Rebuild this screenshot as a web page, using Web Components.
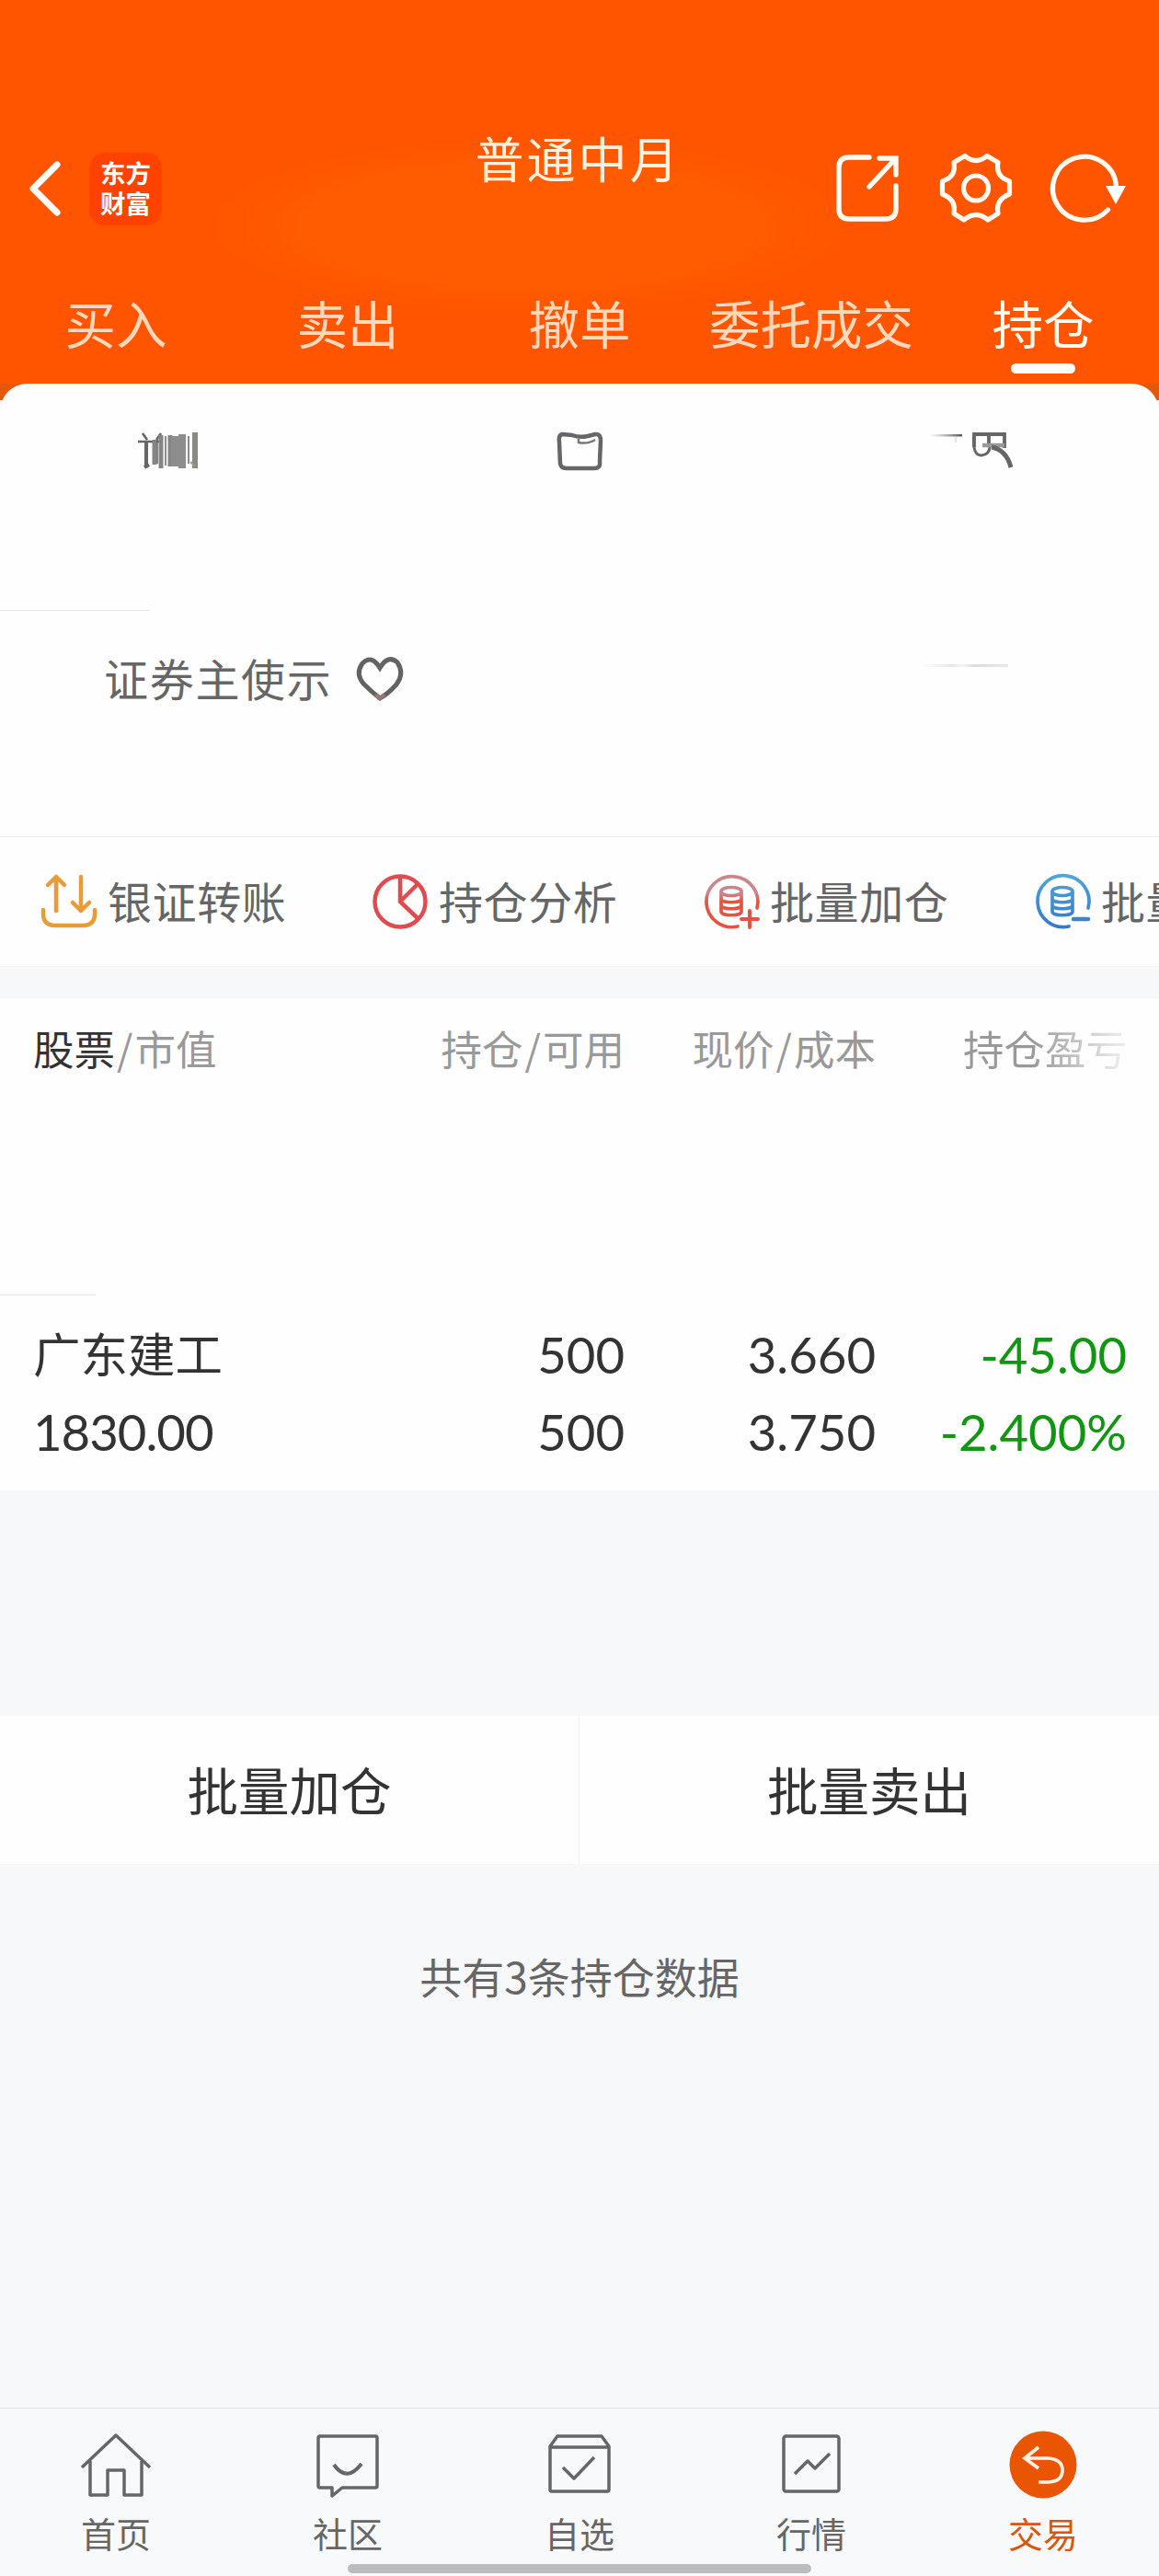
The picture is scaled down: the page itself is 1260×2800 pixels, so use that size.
<!DOCTYPE html>
<html lang="zh-CN">
<head>
<meta charset="utf-8">
<title>持仓</title>
<style>
body {
    margin: 0;
    width: 1260px;
    height: 2800px;
    overflow: hidden;
    background: #f6f8fa;
    color: #333;
    font-family: "Noto Sans CJK SC", sans-serif;
}
</style>
</head>
<body>
<trade-page></trade-page>

<script>
const icons = {
    back: [36, 60, `<path d="M32 4 6 30 32 56" fill="none" stroke="#fff" stroke-width="7" stroke-linecap="round" stroke-linejoin="round"/>`],
    share: [70, 76, `<g fill="none" stroke="#fffaf2" stroke-width="5.4" stroke-linecap="round">
        <path d="M37 4H15Q4 4 4 15V60Q4 71 15 71H55Q66 71 66 60V35"/>
        <path d="M48 5H66V23M65 6 37 36" stroke-linejoin="miter"/></g>`],
    gear: [80, 78, `<g fill="none" stroke="#fffaf2" stroke-width="5.2" stroke-linejoin="round">
        <path d="M28 3.500Q40 13.500 52 3.500L64 10.500Q61 26 76.500 31V45Q61 51 64 66L53 73Q40 62 27 73L16 66Q19 51 3.500 45V31Q19 26 16 10.500Z"/>
        <circle cx="40" cy="38.500" r="13.500"/></g>`],
    refresh: [86, 78, `<path d="M66.500 62A34.500 34.500 0 1 1 75.500 37" fill="none" stroke="#fffaf2" stroke-width="5.2" stroke-linecap="round"/>
        <path d="M64 36H86L75 56Z" fill="#fff"/>`],
    bars: [68, 44, `<g fill="none" stroke="#666">
        <path d="M6 3l5 7M26 3l-5 7M1 12H27" stroke-width="2.6"/>
        <path d="M10 12V38M8 40l5-3" stroke-width="4"/>
        <path d="M19 10V37M26 5V41M36 5V39" stroke-width="5" stroke="#858585"/>
        <path d="M41 6V39M49 4V41" stroke-width="8" stroke="#8d8d8d"/>
        <path d="M22 10V36M31 6V38M56 6V36" stroke-width="1.500"/>
        <path d="M63 2V41" stroke-width="6" stroke="#888b82"/>
        <path d="M58 34l5 5" stroke-width="2" stroke="#999"/></g>`],
    folder: [52, 46, `<path d="M7 4Q3 5 4 12L5 36Q6 41 12 41H42Q49 41 48 34L49 11Q49 3 43 4L35 6Q26 8 18 5Z" fill="none" stroke="#686568" stroke-width="4.500"/>
        <path d="M25 9V13Q35 15 43 10" fill="none" stroke="#777" stroke-width="2.500"/>`],
    fragment: [94, 44, `<defs><linearGradient id="fade"><stop stop-color="#888" stop-opacity="0"/><stop offset="1" stop-color="#555"/></linearGradient></defs>
        <path d="M2 4H38V6.500H2Z" fill="url(#fade)"/><path d="M31 7V13" stroke="#ccc"/>
        <g fill="none" stroke="#666"><path d="M51 18V4H84V19M67 5V18" stroke-width="3.800"/>
        <path d="M51 7Q49 27 59 27Q68 26 68 17" stroke-width="3"/><path d="M60 16H84" stroke="#999" stroke-width="4.500"/>
        <path d="M70 18Q86 21 91 40" stroke-width="5"/></g>`],
    heart: [52, 52, `<path d="M26 47Q17 40 8 31Q-1 20 7 9Q17-1 26 14Q35-1 45 8Q53 20 44 32Q35 42 26 47Z" fill="none" stroke="#626462" stroke-width="5"/>
        <path d="M21 43 26 47 31 43" fill="none" stroke="#9b757a" stroke-width="4"/>`],
    transfer: [62, 60, `<g fill="none" stroke="#e89b37" stroke-width="4.500" stroke-linecap="round" stroke-linejoin="round">
        <path d="M17 40V4M8 12 17 3 26 12M44 3V40M35 31 44 40 53 31"/>
        <path d="M3 39V43Q3 56 16 56H46Q59 56 59 43V39"/></g>`],
    pie: [62, 60, `<g fill="none" stroke="#df4c50" stroke-width="4.500"><circle cx="31" cy="30" r="27.500"/><path d="M31 3V30L51 49M31 30 51 10"/></g>`],
    coinsPlus: [62, 60, `<defs><linearGradient id="red" x2="0" y2="60" gradientUnits="userSpaceOnUse"><stop offset=".35" stop-color="#c9878c"/><stop offset=".5" stop-color="#e25543"/></linearGradient></defs>
        <g fill="none" stroke="url(#red)" stroke-width="3.700" stroke-linecap="round">
        <path d="M59 37A28 27.500 0 1 0 38 57"/><ellipse cx="31" cy="19" rx="11" ry="4.500"/>
        <path d="M20 19V41C20 46 42 46 42 41V19M20 27C20 32 42 32 42 27M20 34C20 39 42 39 42 34"/>
        <path d="M42 49H60M51 40V58" stroke-width="4"/></g>`],
    coinsMinus: [62, 60, `<defs><linearGradient id="blue" x2="0" y2="60" gradientUnits="userSpaceOnUse"><stop stop-color="#4fa6dc"/><stop offset="1" stop-color="#3478c7"/></linearGradient></defs>
        <g fill="none" stroke="url(#blue)" stroke-width="3.700" stroke-linecap="round">
        <path d="M59 37A28 28 0 1 0 38 57"/><ellipse cx="31" cy="19" rx="11" ry="4.500"/>
        <path d="M20 19V41C20 46 42 46 42 41V19M20 27C20 32 42 32 42 27M20 34C20 39 42 39 42 34"/></g>
        <path d="M43 49H59" stroke="#3c82cd" stroke-width="4.500" stroke-linecap="round"/>`],
    home: [78, 74, `<g fill="none" stroke="#666" stroke-width="3.500" stroke-linejoin="round"><path d="M2 40 39 5 76 40"/>
        <path d="M11 33V70H30V43H48V70H67V33"/></g>`],
    chat: [78, 74, `<g fill="none" stroke="#666" stroke-width="3.500" stroke-linejoin="round">
        <path d="M9 6H69Q71 6 71 8V60Q71 62 69 62H33L22 71V62H9Q7 62 7 60V8Q7 6 9 6Z"/>
        <path d="M24 37Q38 57 54 36" stroke-width="4"/></g>`],
    box: [78, 74, `<g fill="none" stroke="#666" stroke-width="3.500" stroke-linejoin="round">
        <path d="M15 6H63L71 17V64Q71 66 69 66H9Q7 66 7 64V17Z M7 18H71"/><path d="M21 40 33 52 55 29"/></g>`],
    chart: [78, 74, `<g fill="none" stroke="#666" stroke-width="3.500" stroke-linejoin="round">
        <rect x="9" y="6" width="60" height="60" rx="2.500"/><path d="M21 47 35 33 43 41 59 25"/></g>`],
    trade: [78, 74, `<circle cx="39" cy="37" r="36.500" fill="#ea5504"/>
        <path d="M34 18 19 30 34 41M19 30H44Q60 31 60 43Q60 55 45 56H34" fill="none" stroke="#fff2e4" stroke-width="3.700"/>`]
};

class UiIcon extends HTMLElement {
    connectedCallback() {
        const [width, height, body] = icons[this.getAttribute("name")];
        this.attachShadow({mode: "open"}).innerHTML = `
            <style>
            :host { display: block; flex: none; }
            svg { display: block; overflow: visible; }
            </style>
            <svg width="${width}" height="${height}" viewBox="0 0 ${width} ${height}">${body}</svg>`;
    }
}

class TradeHeader extends HTMLElement {
    connectedCallback() {
        this.attachShadow({mode: "open"}).innerHTML = `
            <style>
            :host {
                display: block;
                height: 435px;
                background:
                    radial-gradient(closest-side, #ff5b00 70%, transparent) 225px 150px / 700px 190px no-repeat,
                    linear-gradient(#f50 417px, #e2590c 417px);
                color: #fff;
            }
            .bar {
                height: 176px;
                padding: 117px 36px 0 30px;
                display: grid;
                grid-template-columns: 1fr auto 1fr;
                align-items: center;
                box-sizing: content-box;
            }
            .left, .right {
                display: flex;
                align-items: center;
            }
            .left { gap: 31px; }
            .right { justify-content: flex-end; gap: 37px; }
            .right ui-icon:first-child { margin-right: 6px; }
            .logo {
                width: 79px;
                height: 79px;
                box-sizing: border-box;
                padding-top: 5px;
                border-radius: 17px;
                background: #ff4200;
                font-size: 27.500px;
                font-weight: 700;
                line-height: 33px;
                text-align: center;
            }
            h1 {
                margin: 0 0 68px 3px;
                font-size: 53px;
                letter-spacing: 3px;
                font-weight: 400;
                line-height: 60px;
                color: #fff0df;
            }
            nav {
                display: grid;
                grid-template-columns: repeat(5, 1fr);
            }
            </style>
            <div class="bar">
                <div class="left">
                    <ui-icon name="back"></ui-icon>
                    <div class="logo">东方<br>财富</div>
                </div>
                <h1>普通中月</h1>
                <div class="right">
                    <ui-icon name="share"></ui-icon>
                    <ui-icon name="gear"></ui-icon>
                    <ui-icon name="refresh"></ui-icon>
                </div>
            </div>
            <nav>
                <top-tab>买入</top-tab>
                <top-tab>卖出</top-tab>
                <top-tab>撤单</top-tab>
                <top-tab>委托成交</top-tab>
                <top-tab active>持仓</top-tab>
            </nav>`;
    }
}

class TopTab extends HTMLElement {
    connectedCallback() {
        this.attachShadow({mode: "open"}).innerHTML = `
            <style>
            :host {
                display: flex;
                flex-direction: column;
                align-items: center;
                padding-top: 17px;
                font-size: 55.500px;
                line-height: 80px;
                color: #ffd8bd;
            }
            :host([active]) { color: #fffaf0; }
            :host([active])::after {
                content: "";
                width: 70px;
                height: 11px;
                margin-top: 5px;
                border-radius: 6px;
                background: #fff;
            }
            </style>
            <slot></slot>`;
    }
}

class AssetSummary extends HTMLElement {
    connectedCallback() {
        this.attachShadow({mode: "open"}).innerHTML = `
            <style>
            :host {
                display: block;
                height: 492px;
                box-sizing: border-box;
                margin-top: -18px;
                border-radius: 30px 30px 0 0;
                background: #fefefe;
            }
            .top {
                height: 246px;
                box-sizing: border-box;
                padding: 51px 158px 0 149px;
                display: grid;
                grid-template-columns: 455px 1fr auto;
                align-items: start;
            }
            .line {
                width: 163px;
                height: 1px;
                background: #e6e6e6;
            }
            .market {
                display: flex;
                align-items: center;
                padding: 36px 164px 0 113px;
                height: 74px;
                font-size: 48px;
                letter-spacing: 1.7px;
                line-height: 72px;
                color: #666;
            }
            .market span { margin-top: -3px; }
            .market ui-icon { margin: 1px auto 0 25px; }
            .faint {
                width: 94px;
                height: 3px;
                margin-bottom: 27px;
                background: linear-gradient(90deg, transparent, #e8e8e8 35%, #f4f4f4 48%, #dcdcdc 60%, #eaeaea);
            }
            </style>
            <div class="top">
                <ui-icon name="bars"></ui-icon>
                <ui-icon name="folder"></ui-icon>
                <ui-icon name="fragment"></ui-icon>
            </div>
            <div class="line"></div>
            <div class="market">
                <span>证券主使示</span>
                <ui-icon name="heart"></ui-icon>
                <div class="faint"></div>
            </div>`;
    }
}

class QuickAction extends HTMLElement {
    connectedCallback() {
        this.attachShadow({mode: "open"}).innerHTML = `
            <style>
            :host {
                display: flex;
                align-items: center;
                gap: 11px;
                flex: none;
                width: 360px;
                font-size: 48px;
                letter-spacing: .6px;
                line-height: 70px;
                white-space: nowrap;
                color: #666;
            }
            span { margin-bottom: 3px; }
            </style>
            <ui-icon name="${this.getAttribute("icon")}"></ui-icon>
            <span><slot></slot></span>`;
    }
}

class QuickActions extends HTMLElement {
    connectedCallback() {
        this.attachShadow({mode: "open"}).innerHTML = `
            <style>
            :host {
                display: flex;
                height: 141px;
                box-sizing: border-box;
                padding: 0 0 1px 44px;
                border-top: 1px solid #f0f0f0;
                background: #fefefe;
                overflow: hidden;
            }
            </style>
            <quick-action icon="transfer">银证转账</quick-action>
            <quick-action icon="pie">持仓分析</quick-action>
            <quick-action icon="coinsPlus">批量加仓</quick-action>
            <quick-action icon="coinsMinus">批量卖出</quick-action>`;
    }
}

class HoldingsTable extends HTMLElement {
    connectedCallback() {
        this.attachShadow({mode: "open"}).innerHTML = `
            <style>
            :host {
                display: block;
                height: 535px;
                margin-top: 35px;
                background: #fefefe;
            }
            .row {
                display: grid;
                grid-template-columns: 1fr 273px 273px 273px;
                padding: 0 35px 0 36px;
                text-align: right;
                white-space: nowrap;
            }
            .row > :first-child { text-align: left; }
            .head {
                height: 322px;
                box-sizing: border-box;
                padding-top: 21px;
                font-size: 44.500px;
                line-height: 66px;
                color: #999;
            }
            .head b { font-weight: 400; color: #333; }
            .head i { font-style: normal; padding: 0 2px; }
            .fade {
                background: linear-gradient(90deg, #999 62%, #e8e8e8 96%);
                background-clip: text;
                -webkit-background-clip: text;
                color: transparent;
                height: 66px;
            }
            .line {
                width: 104px;
                height: 1px;
                background: #e4e4e4;
            }
            .stock {
                padding-top: 22px;
                font: 54.500px/84px Lato, "Noto Sans CJK SC", sans-serif;
            }
            .stock + .stock { padding-top: 0; }
            .name {
                margin-top: -2px;
                font: 51.500px/84px "Noto Sans CJK SC", sans-serif;
            }
            .value { letter-spacing: -1px; }
            .down { color: #119611; }
            </style>
            <div class="row head">
                <span><b>股票</b><i>/</i>市值</span>
                <span>持仓<i>/</i>可用</span>
                <span>现价<i>/</i>成本</span>
                <span class="fade">持仓盈亏</span>
            </div>
            <div class="line"></div>
            <div class="row stock">
                <span class="name">广东建工</span>
                <span>500</span>
                <span>3.660</span>
                <span class="down">-45.00</span>
            </div>
            <div class="row stock">
                <span class="value">1830.00</span>
                <span>500</span>
                <span>3.750</span>
                <span class="down">-2.400%</span>
            </div>`;
    }
}

class BatchBar extends HTMLElement {
    connectedCallback() {
        this.attachShadow({mode: "open"}).innerHTML = `
            <style>
            :host {
                display: grid;
                grid-template-columns: 629px 1fr;
                margin-top: 245px;
                height: 161px;
                background: #fefefe;
            }
            button {
                border: 0;
                padding: 0 0 3px;
                background: none;
                font: inherit;
                font-size: 55.500px;
                color: #333;
            }
            button + button { border-left: 1px solid #f1f2f3; }
            </style>
            <button>批量加仓</button>
            <button>批量卖出</button>`;
    }
}

class NavItem extends HTMLElement {
    connectedCallback() {
        this.attachShadow({mode: "open"}).innerHTML = `
            <style>
            :host {
                display: flex;
                flex-direction: column;
                align-items: center;
                gap: 11px;
                font-size: 38px;
                line-height: 52px;
                color: #666;
            }
            :host([active]) { color: #d8560f; }
            </style>
            <ui-icon name="${this.getAttribute("icon")}"></ui-icon>
            <span><slot></slot></span>`;
    }
}

class BottomNav extends HTMLElement {
    connectedCallback() {
        this.attachShadow({mode: "open"}).innerHTML = `
            <style>
            :host {
                display: block;
                height: 183px;
                box-sizing: border-box;
                margin-top: auto;
                padding-top: 24px;
                border-top: 1px solid #dfe0e2;
                background: #f8f9fb;
            }
            nav {
                display: grid;
                grid-template-columns: repeat(5, 1fr);
                height: 145px;
            }
            .handle {
                width: 504px;
                height: 10px;
                margin: 0 auto;
                border-radius: 5px;
                background: #bcbcbc;
            }
            </style>
            <nav>
                <nav-item icon="home">首页</nav-item>
                <nav-item icon="chat">社区</nav-item>
                <nav-item icon="box">自选</nav-item>
                <nav-item icon="chart">行情</nav-item>
                <nav-item icon="trade" active>交易</nav-item>
            </nav>
            <div class="handle"></div>`;
    }
}

class TradePage extends HTMLElement {
    connectedCallback() {
        this.attachShadow({mode: "open"}).innerHTML = `
            <style>
            :host {
                display: flex;
                flex-direction: column;
                height: 2800px;
            }
            p {
                margin: 87px 0 0;
                font-size: 46px;
                line-height: 68px;
                text-align: center;
                color: #666;
            }
            </style>
            <trade-header></trade-header>
            <asset-summary></asset-summary>
            <quick-actions></quick-actions>
            <holdings-table></holdings-table>
            <batch-bar></batch-bar>
            <p>共有3条持仓数据</p>
            <bottom-nav></bottom-nav>`;
    }
}

customElements.define("ui-icon", UiIcon);
customElements.define("top-tab", TopTab);
customElements.define("trade-header", TradeHeader);
customElements.define("asset-summary", AssetSummary);
customElements.define("quick-action", QuickAction);
customElements.define("quick-actions", QuickActions);
customElements.define("holdings-table", HoldingsTable);
customElements.define("batch-bar", BatchBar);
customElements.define("nav-item", NavItem);
customElements.define("bottom-nav", BottomNav);
customElements.define("trade-page", TradePage);
</script>
</body>
</html>
